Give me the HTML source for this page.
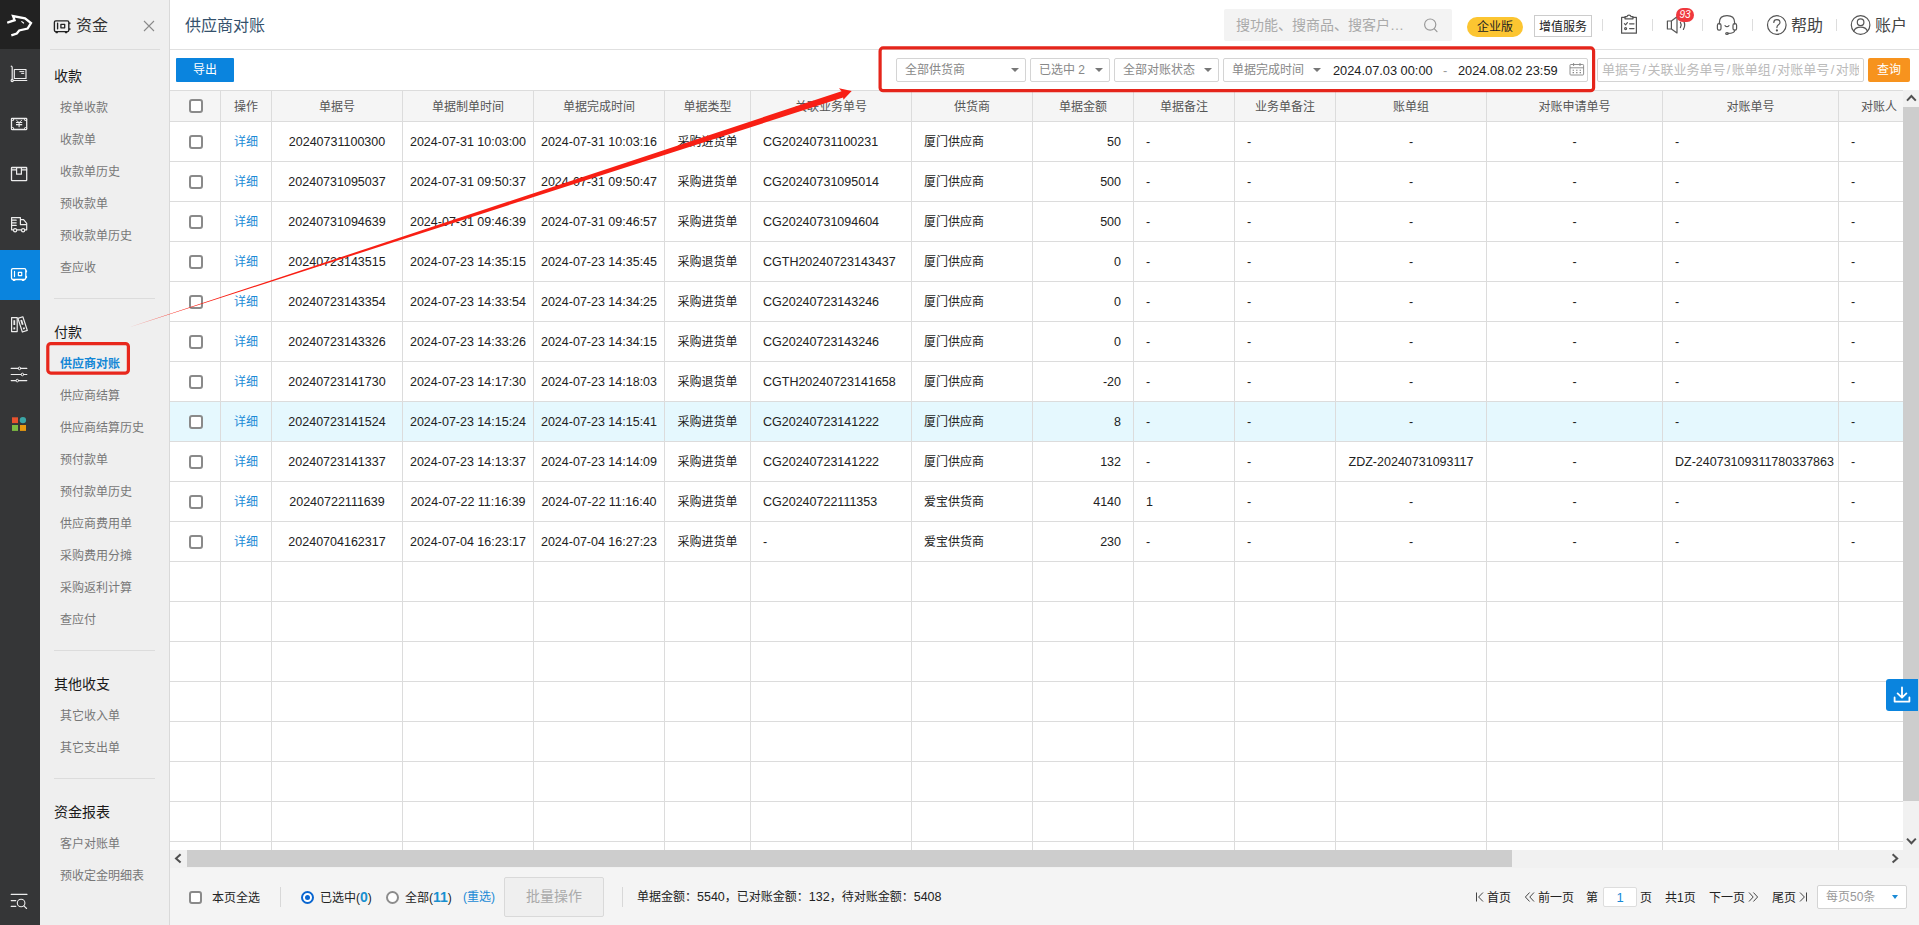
<!DOCTYPE html>
<html lang="zh-CN"><head><meta charset="utf-8"><title>供应商对账</title>
<style>
*{box-sizing:border-box;margin:0;padding:0}
html,body{width:1919px;height:925px;overflow:hidden;background:#fff}
body{font-family:"Liberation Sans","Noto Sans CJK SC",sans-serif;font-size:12px;color:#333;position:relative}
a{color:#1a8ad6;text-decoration:none}
i{font-style:normal}
.abs{position:absolute}
/* left rail */
#rail{position:absolute;left:0;top:0;width:40px;height:925px;background:#353637}
#rail .logo{position:absolute;left:0;top:0;width:40px;height:49px;background:#222}
#rail .act{position:absolute;left:0;top:250px;width:40px;height:50px;background:#0a84de}
#rail svg{position:absolute;left:0}
/* sidebar */
#side{position:absolute;left:40px;top:0;width:130px;height:925px;background:#efefef;border-right:1px solid #d9d9d9}
#side .ttl{position:absolute;left:36px;top:15px;font-size:16px;color:#333;line-height:22px}
#side .hr{position:absolute;left:10px;width:110px;height:1px;background:#dcdcdc}
#side .sec{margin-top:1px;position:absolute;left:14px;font-size:14px;color:#1a1a1a;line-height:20px}
#side .it{margin-top:1px;position:absolute;left:20px;font-size:12px;color:#777;line-height:18px;white-space:nowrap}
#side .it.on{color:#1487d6;font-weight:bold}
/* header */
#head{position:absolute;left:170px;top:0;width:1749px;height:50px;border-bottom:1px solid #e0e0e0;background:#fff}
#head .title{position:absolute;left:15px;top:14px;font-size:16px;line-height:24px;color:#34516c}
/* toolbar */
#tool{position:absolute;left:170px;top:50px;width:1749px;height:40px;background:#fff}
.btn-exp{position:absolute;left:6px;top:8px;width:58px;height:24px;background:#0a84de;color:#fff;font-size:12px;line-height:25px;text-align:center;border-radius:1px}
.sel{position:absolute;top:8px;height:24px;border:1px solid #d4d4d4;border-radius:2px;background:#fff;color:#888;font-size:12px;line-height:22px;padding-left:8px;white-space:nowrap}
.sel .car{position:absolute;right:6px;top:9px;width:0;height:0;border-left:4px solid transparent;border-right:4px solid transparent;border-top:4px solid #777}
/* grid */
.grid{position:absolute;left:170px;top:90px;width:1733px;height:760px;overflow:hidden;border-top:1px solid #dcdcdc;background:#fff}
.tr{display:flex;height:40px;white-space:nowrap}
.tr.th{height:31px;background:#f5f5f5;color:#555}
.tr.hl{background:#e5f8fe}
.td{flex:none;height:40px;border-right:1px solid #dcdcdc;border-bottom:1px solid #dcdcdc;text-align:center;line-height:41px;overflow:hidden;color:#222}
.tr.th .td{height:31px;line-height:32px;color:#555}
.td.n{font-size:12.5px}
.td.l{text-align:left;padding-left:12px}
.td.r{text-align:right;padding-right:12px}
.td.c0{width:51px;position:relative}
.td.c1{width:51px}
.cb{position:absolute;left:19px;top:13px;width:14px;height:14px;border:2px solid #8a8a8a;border-radius:3px;background:#fff}
.tr.th .cb{top:8px}
/* footer */
#foot{position:absolute;left:170px;top:868px;width:1749px;height:57px;background:#f4f4f4;font-size:12px;color:#222}
#foot span,#foot a{position:absolute;white-space:nowrap;line-height:18px;margin-top:1px}
.gsearch{position:absolute;left:1054px;top:9px;width:228px;height:32px;background:#f3f3f3;border-radius:2px}
.gsearch span{position:absolute;left:12px;top:6px;font-size:14px;line-height:20px;color:#aaa;white-space:nowrap}
.pill{position:absolute;left:1297px;top:17px;width:56px;height:20px;border-radius:10px;background:#fcc531;color:#222;font-size:12px;line-height:20px;text-align:center}
.vas{position:absolute;left:1364px;top:15px;width:58px;height:22px;border:1px solid #ccc;color:#222;font-size:12px;line-height:22px;text-align:center;white-space:nowrap}
.vsep{position:absolute;top:19px;width:1px;height:12px;background:#ddd}
.badge{position:absolute;left:1506px;top:8px;width:18px;height:14px;border-radius:7px;background:#f0383e;color:#fff;font-size:10px;line-height:14px;text-align:center;font-style:italic}
.htxt{position:absolute;top:14px;font-size:16px;line-height:24px;color:#444;white-space:nowrap}
.sel .dt{position:absolute;top:1px;color:#222;font-size:12.8px;line-height:22px}
.sel.kw{padding-left:4px;overflow:hidden;font-size:13px;color:#bbb}
.sel.kw span{display:block;width:257px;overflow:hidden;white-space:nowrap}
.sel.kw i{padding:0 1.4px}
.btn-q{position:absolute;left:1698px;top:8px;width:42px;height:24px;background:#f7931e;color:#fff;font-size:12px;line-height:24px;text-align:center;border-radius:2px}
.vtrack{position:absolute;left:1903px;top:90px;width:16px;height:760px;background:#f1f1f1}
.vthumb{position:absolute;left:1903px;top:107px;width:16px;height:694px;background:#cdcdcd}
.htrack{position:absolute;left:170px;top:850px;width:1749px;height:18px;background:#f1f1f1}
.hthumb{position:absolute;left:187px;top:850px;width:1325px;height:17px;background:#cdcdcd}
.dl{position:absolute;left:1886px;top:679px;width:32px;height:32px;background:#0a84de;border-radius:3px 0 0 3px}
.dl svg{position:absolute;left:5px;top:5px}
#foot b{color:#1890d0;font-size:14px;line-height:14px}
#foot em{font-style:normal;font-size:12.5px}
.fsep{position:absolute;top:19px;width:1px;height:20px;background:#d8d8d8}
.rd{position:absolute;top:23px;width:13px;height:13px;border-radius:50%;border:2px solid #8c8c8c;background:#fff}
.rd.on{border-color:#0a66d0}
.rd.on:after{content:"";position:absolute;left:2px;top:2px;width:5px;height:5px;border-radius:50%;background:#0a66d0}
.bat{position:absolute;left:334px;top:9px;width:100px;height:40px;border:1px solid #d9d9d9;border-radius:2px;background:#efefef;color:#aaa;font-size:14px;line-height:37px;text-align:center}
.pgin{position:absolute;left:1433px;top:19px;width:34px;height:20px;border:1px solid #ddd;border-radius:2px;background:#fff;color:#1a8ad6;font-size:13px;line-height:19px;text-align:center}
.pgsel{position:absolute;left:1647px;top:17px;width:90px;height:24px;border:1px solid #d4d4d4;border-radius:2px;background:#fff;color:#999;font-size:12px;line-height:22px;padding-left:8px}
.pgsel i{position:absolute;right:8px;top:9px;width:0;height:0;border-left:3px solid transparent;border-right:3px solid transparent;border-top:4px solid #1a8ad6}

</style></head>
<body>
<div id="rail">
  <div class="logo"></div>
  <div class="act"></div>
  <svg width="40" height="925" viewBox="0 0 40 925" fill="none" stroke="#ededed" stroke-width="1.2" stroke-linecap="round" stroke-linejoin="round" style="top:0">
  <!-- logo -->
  <path d="M8.3 22.4 L14.6 20.2 L13 16 L25 18.4 L31 23 L27.6 28.6 L19.2 30.5 L16.8 33.5 L12.4 35" stroke="#fff" stroke-width="2.3" stroke-linecap="square" stroke-linejoin="miter"/>
  <path d="M21.8 21.6 L23.6 23" stroke="#fff" stroke-width="1.2"/>
  <!-- trolley -->
  <path d="M11.2 66.2 Q12.2 66.4 12.2 67.6 V79.4 M13.3 80.5 H26.8"/>
  <circle cx="12.2" cy="80.5" r="1.1"/>
  <rect x="14.3" y="69.5" width="11.7" height="9"/>
  <path d="M19.8 71.6 H23.8 M21.6 73.4 H23.8" stroke-width="1"/>
  <!-- bill -->
  <rect x="11.5" y="118.5" width="15.2" height="11" rx="0.5" stroke-width="1.3"/>
  <g fill="#ededed" stroke="none"><circle cx="12.6" cy="119.6" r="1.5"/><circle cx="25.6" cy="119.6" r="1.5"/><circle cx="12.6" cy="128.4" r="1.5"/><circle cx="25.6" cy="128.4" r="1.5"/></g>
  <g fill="#353637" stroke="none"><circle cx="12.6" cy="119.6" r="0.55"/><circle cx="25.6" cy="119.6" r="0.55"/><circle cx="12.6" cy="128.4" r="0.55"/><circle cx="25.6" cy="128.4" r="0.55"/></g>
  <path d="M16.6 120.4 L19.1 122.6 L21.6 120.4" stroke-width="0.9"/>
  <path d="M16 122.5 H22.2 M16 124.6 H22.2 M19.1 122.6 V127.2" stroke-width="1.1" stroke-linecap="butt"/>
  <!-- package -->
  <rect x="11.5" y="167.5" width="15.2" height="13.1" rx="0.6" stroke-width="1.3"/>
  <path d="M11.5 169.8 H16.6 M21.4 169.8 H26.7 M16.6 167.5 V174.2 H21.4 V167.5"/>
  <!-- truck -->
  <path d="M11.6 217.6 H20.4 V224.6 H26.7 M20.4 219.6 H23.6 L26.7 223.4 V229.8 H24.8 M21.4 229.8 H16.8 M13.4 229.8 H11.6 V217.6 M11.6 220.2 H16.2 M11.6 222.8 H16.2 M11.6 225.4 H16.2"/>
  <circle cx="15.1" cy="230.2" r="1.6"/><circle cx="23.1" cy="230.2" r="1.6"/>
  <!-- safe (active) -->
  <g stroke="#fff">
  <rect x="11.5" y="268.6" width="14.3" height="10.9" rx="1.4" stroke-width="1.3"/>
  <path d="M14.5 271.4 V276.6 M13.4 280.4 H14.8 M22.4 280.4 H23.8 M26.5 270.8 V271.8 M26.5 276.4 V277.4"/>
  <rect x="18.4" y="272.3" width="3.3" height="3.3" stroke-width="1.2"/>
  </g>
  <!-- binders -->
  <rect x="11.6" y="317.6" width="5.6" height="14" />
  <rect x="13.4" y="320.2" width="1.8" height="4.8" fill="#ededed" stroke="none"/>
  <rect x="13.4" y="327.4" width="1.8" height="2" fill="#ededed" stroke="none"/>
  <g transform="rotate(-18 22.6 324.4)">
  <rect x="20" y="317.2" width="5.2" height="14.4"/>
  <rect x="21.7" y="319.8" width="1.8" height="5" fill="#ededed" stroke="none"/>
  <rect x="21.7" y="327.6" width="1.8" height="1.8" fill="#ededed" stroke="none"/>
  </g>
  <!-- sliders -->
  <path d="M11.2 368.4 H18.2 M20.8 368.4 H26.8 M11.2 374.5 H21.1 M23.7 374.5 H26.8 M11.2 380.6 H16 M18.6 380.6 H26.8"/>
  <circle cx="19.5" cy="368.4" r="1.3" stroke-width="1"/><circle cx="22.4" cy="374.5" r="1.3" stroke-width="1"/><circle cx="17.3" cy="380.6" r="1.3" stroke-width="1"/>
  <!-- colour apps -->
  <g stroke="none">
  <rect x="12" y="417.3" width="6" height="5.8" fill="#e8522e"/>
  <circle cx="22.9" cy="420.1" r="3.2" fill="#3ba6a6"/>
  <rect x="12" y="425" width="6" height="5.9" fill="#7cbb42"/>
  <rect x="20" y="425" width="6" height="5.9" fill="#e8990f"/>
  </g>
  <!-- bottom search list -->
  <path d="M11.2 894.4 H27 M11.2 900.6 H15.8 M11.2 906.4 H15.8 M23.9 905.8 L26.6 908.5" stroke-width="1.1"/>
  <circle cx="21.1" cy="903" r="3.8" stroke-width="1.1"/>
</svg>

</div>
<div id="side">
  <svg class="abs" style="left:10px;top:16px" width="24" height="20" viewBox="50 16 24 20" fill="none" stroke="#222" stroke-width="1.35" stroke-linejoin="round" stroke-linecap="round">
  <rect x="54.4" y="20.8" width="14.4" height="10.8" rx="1.4"/>
  <path d="M57.6 23.2 V28.8 M56 32.6 H57.4 M65.4 32.6 H66.8 M69.8 22.8 V23.6 M69.8 28.6 V29.4"/>
  <rect x="60.9" y="24.3" width="3.8" height="3.5" stroke-width="1.3"/>
</svg>
<svg class="abs" style="left:102px;top:19px" width="14" height="14" viewBox="142 19 14 14" stroke="#8a8a8a" stroke-width="1.1" fill="none"><path d="M144 21 L154 31 M154 21 L144 31"/></svg>

  <div class="ttl">资金</div>
  <div class="hr" style="top:49px"></div>
  <div class="sec" style="top:65px">收款</div>
  <div class="it" style="top:98px">按单收款</div>
  <div class="it" style="top:130px">收款单</div>
  <div class="it" style="top:162px">收款单历史</div>
  <div class="it" style="top:194px">预收款单</div>
  <div class="it" style="top:226px">预收款单历史</div>
  <div class="it" style="top:258px">查应收</div>
  <div class="hr" style="top:298px;left:14px;width:101px"></div>
  <div class="sec" style="top:321px">付款</div>
  <div class="it on" style="top:354px">供应商对账</div>
  <div class="it" style="top:386px">供应商结算</div>
  <div class="it" style="top:418px">供应商结算历史</div>
  <div class="it" style="top:450px">预付款单</div>
  <div class="it" style="top:482px">预付款单历史</div>
  <div class="it" style="top:514px">供应商费用单</div>
  <div class="it" style="top:546px">采购费用分摊</div>
  <div class="it" style="top:578px">采购返利计算</div>
  <div class="it" style="top:610px">查应付</div>
  <div class="hr" style="top:650px;left:14px;width:101px"></div>
  <div class="sec" style="top:673px">其他收支</div>
  <div class="it" style="top:706px">其它收入单</div>
  <div class="it" style="top:738px">其它支出单</div>
  <div class="hr" style="top:778px;left:14px;width:101px"></div>
  <div class="sec" style="top:801px">资金报表</div>
  <div class="it" style="top:834px">客户对账单</div>
  <div class="it" style="top:866px">预收定金明细表</div>
</div>
<div id="head">
  <div class="title">供应商对账</div>
  <div class="gsearch"><span>搜功能、搜商品、搜客户…</span>
  <svg class="abs" style="left:198px;top:7px" width="18" height="18" viewBox="0 0 18 18" fill="none" stroke="#999" stroke-width="1.2" stroke-linecap="round"><circle cx="8.2" cy="8.6" r="5.6"/><path d="M12.4 12.8 L15 15.6"/></svg>
</div>
<div class="pill">企业版</div>
<div class="vas">增值服务</div>
<i class="vsep" style="left:1432px"></i>
<i class="vsep" style="left:1482px"></i>
<i class="vsep" style="left:1532px"></i>
<i class="vsep" style="left:1582px"></i>
<i class="vsep" style="left:1666px"></i>
<!-- clipboard -->
<svg class="abs" style="left:1448px;top:12px" width="22" height="24" viewBox="1618 12 22 24" fill="none" stroke="#555" stroke-width="1.2" stroke-linejoin="round" stroke-linecap="round">
  <path d="M1625 17.4 H1621.6 V33.2 H1636.4 V17.4 H1633"/>
  <path d="M1625 18.8 V16.6 H1627 Q1627.2 15.2 1629 15.2 Q1630.8 15.2 1631 16.6 H1633 V18.8 Z"/>
  <path d="M1624.4 23.6 L1625.6 24.8 L1627.4 22.6 M1629.6 23.8 H1634 M1629.6 28.6 H1634"/>
  <circle cx="1625.6" cy="28.6" r="1"/>
</svg>
<!-- speaker -->
<svg class="abs" style="left:1494px;top:6px" width="34" height="30" viewBox="1664 6 34 30" fill="none" stroke="#555" stroke-width="1.2" stroke-linejoin="round" stroke-linecap="round">
  <path d="M1667.4 21 H1671.4 L1677 16.8 V33 L1671.4 29 H1667.4 Z M1671.4 21 V29"/>
  <path d="M1680.4 22.4 Q1682 25 1680.4 27.6 M1683.4 20.6 Q1686 25 1683.4 29.4"/>
</svg>
<div class="badge">93</div>
<!-- headset -->
<svg class="abs" style="left:1544px;top:12px" width="26" height="26" viewBox="1714 12 26 26" fill="none" stroke="#555" stroke-width="1.2" stroke-linejoin="round" stroke-linecap="round">
  <path d="M1719.4 24 V22.4 Q1719.4 15.6 1727 15.6 Q1734.6 15.6 1734.6 22.4 V24"/>
  <rect x="1717.4" y="23.6" width="3.6" height="6.6" rx="1.6"/>
  <rect x="1733" y="23.6" width="3.6" height="6.6" rx="1.6"/>
  <path d="M1734.8 30.2 Q1734.4 33.4 1728 33.4"/>
  <ellipse cx="1727" cy="33.4" rx="1.3" ry="0.9"/>
  <path d="M1725 25.6 Q1727 27.8 1729 25.6"/>
</svg>
<!-- help -->
<svg class="abs" style="left:1596px;top:14px" width="22" height="22" viewBox="1766 14 22 22" fill="none" stroke="#555" stroke-width="1.2" stroke-linecap="round"><circle cx="1776.8" cy="25" r="9.3"/><path d="M1773.8 22.4 Q1773.8 19.6 1776.9 19.6 Q1780 19.6 1780 22.2 Q1780 23.8 1778.4 24.8 Q1776.9 25.8 1776.9 27.6"/><circle cx="1776.9" cy="30.4" r="0.5" fill="#555"/></svg>
<div class="htxt" style="left:1621px">帮助</div>
<!-- account -->
<svg class="abs" style="left:1680px;top:14px" width="22" height="22" viewBox="1850 14 22 22" fill="none" stroke="#555" stroke-width="1.2" stroke-linecap="round"><circle cx="1860.6" cy="25" r="9.3"/><circle cx="1860.6" cy="22.2" r="3.3"/><path d="M1853.8 31.2 Q1855.2 27.2 1860.6 27.2 Q1866 27.2 1867.4 31.2"/></svg>
<div class="htxt" style="left:1705px">账户</div>

</div>
<div id="tool">
  <div class="btn-exp">导出</div>
  <div class="sel" style="left:726px;width:130px">全部供货商<i class="car"></i></div>
<div class="sel" style="left:860px;width:80px">已选中 2<i class="car"></i></div>
<div class="sel" style="left:944px;width:105px">全部对账状态<i class="car"></i></div>
<div class="sel" style="left:1053px;width:365px">单据完成时间<i class="car" style="right:auto;left:89px"></i>
  <span class="dt" style="left:109px">2024.07.03 00:00</span><span class="dt" style="left:219px;color:#999">-</span><span class="dt" style="left:234px">2024.08.02 23:59</span>
  <svg class="abs" style="left:345px;top:3px" width="16" height="14" viewBox="0 0 16 14" fill="none" stroke="#858585" stroke-width="0.9"><rect x="1" y="2.5" width="13.6" height="10.5" rx="0.8"/><path d="M1 5.8 H14.6 M4.6 1 V4 M11 1 V4" /><path d="M3.6 8.2 H5 M7.1 8.2 H8.5 M10.6 8.2 H12 M3.6 10.6 H5 M7.1 10.6 H8.5 M10.6 10.6 H12" stroke-width="1.1"/></svg>
</div>
<div class="sel kw" style="left:1427px;width:267px"><span>单据号<i>/</i>关联业务单号<i>/</i>账单组<i>/</i>对账单号<i>/</i>对账人</span></div>
<div class="btn-q">查询</div>

</div>
<div class="grid">
<div class="tr th"><div class="td c0"><i class="cb"></i></div><div class="td c1">操作</div>
<div class="td" style="width:131px">单据号</div>
<div class="td" style="width:131px">单据制单时间</div>
<div class="td" style="width:131px">单据完成时间</div>
<div class="td" style="width:86px">单据类型</div>
<div class="td" style="width:161px">关联业务单号</div>
<div class="td" style="width:121px">供货商</div>
<div class="td" style="width:101px">单据金额</div>
<div class="td" style="width:101px">单据备注</div>
<div class="td" style="width:101px">业务单备注</div>
<div class="td" style="width:151px">账单组</div>
<div class="td" style="width:176px">对账申请单号</div>
<div class="td" style="width:176px">对账单号</div>
<div class="td" style="width:81px">对账人</div>
</div>
<div class="tr"><div class="td c0"><i class="cb"></i></div><div class="td c1"><a>详细</a></div>
<div class="td c n" style="width:131px">20240731100300</div>
<div class="td c n" style="width:131px">2024-07-31 10:03:00</div>
<div class="td c n" style="width:131px">2024-07-31 10:03:16</div>
<div class="td c" style="width:86px">采购进货单</div>
<div class="td l n" style="width:161px">CG20240731100231</div>
<div class="td l" style="width:121px">厦门供应商</div>
<div class="td r n" style="width:101px">50</div>
<div class="td l n" style="width:101px">-</div>
<div class="td l n" style="width:101px">-</div>
<div class="td c n" style="width:151px">-</div>
<div class="td c n" style="width:176px">-</div>
<div class="td l n" style="width:176px">-</div>
<div class="td l n" style="width:81px">-</div>
</div>
<div class="tr"><div class="td c0"><i class="cb"></i></div><div class="td c1"><a>详细</a></div>
<div class="td c n" style="width:131px">20240731095037</div>
<div class="td c n" style="width:131px">2024-07-31 09:50:37</div>
<div class="td c n" style="width:131px">2024-07-31 09:50:47</div>
<div class="td c" style="width:86px">采购进货单</div>
<div class="td l n" style="width:161px">CG20240731095014</div>
<div class="td l" style="width:121px">厦门供应商</div>
<div class="td r n" style="width:101px">500</div>
<div class="td l n" style="width:101px">-</div>
<div class="td l n" style="width:101px">-</div>
<div class="td c n" style="width:151px">-</div>
<div class="td c n" style="width:176px">-</div>
<div class="td l n" style="width:176px">-</div>
<div class="td l n" style="width:81px">-</div>
</div>
<div class="tr"><div class="td c0"><i class="cb"></i></div><div class="td c1"><a>详细</a></div>
<div class="td c n" style="width:131px">20240731094639</div>
<div class="td c n" style="width:131px">2024-07-31 09:46:39</div>
<div class="td c n" style="width:131px">2024-07-31 09:46:57</div>
<div class="td c" style="width:86px">采购进货单</div>
<div class="td l n" style="width:161px">CG20240731094604</div>
<div class="td l" style="width:121px">厦门供应商</div>
<div class="td r n" style="width:101px">500</div>
<div class="td l n" style="width:101px">-</div>
<div class="td l n" style="width:101px">-</div>
<div class="td c n" style="width:151px">-</div>
<div class="td c n" style="width:176px">-</div>
<div class="td l n" style="width:176px">-</div>
<div class="td l n" style="width:81px">-</div>
</div>
<div class="tr"><div class="td c0"><i class="cb"></i></div><div class="td c1"><a>详细</a></div>
<div class="td c n" style="width:131px">20240723143515</div>
<div class="td c n" style="width:131px">2024-07-23 14:35:15</div>
<div class="td c n" style="width:131px">2024-07-23 14:35:45</div>
<div class="td c" style="width:86px">采购退货单</div>
<div class="td l n" style="width:161px">CGTH20240723143437</div>
<div class="td l" style="width:121px">厦门供应商</div>
<div class="td r n" style="width:101px">0</div>
<div class="td l n" style="width:101px">-</div>
<div class="td l n" style="width:101px">-</div>
<div class="td c n" style="width:151px">-</div>
<div class="td c n" style="width:176px">-</div>
<div class="td l n" style="width:176px">-</div>
<div class="td l n" style="width:81px">-</div>
</div>
<div class="tr"><div class="td c0"><i class="cb"></i></div><div class="td c1"><a>详细</a></div>
<div class="td c n" style="width:131px">20240723143354</div>
<div class="td c n" style="width:131px">2024-07-23 14:33:54</div>
<div class="td c n" style="width:131px">2024-07-23 14:34:25</div>
<div class="td c" style="width:86px">采购进货单</div>
<div class="td l n" style="width:161px">CG20240723143246</div>
<div class="td l" style="width:121px">厦门供应商</div>
<div class="td r n" style="width:101px">0</div>
<div class="td l n" style="width:101px">-</div>
<div class="td l n" style="width:101px">-</div>
<div class="td c n" style="width:151px">-</div>
<div class="td c n" style="width:176px">-</div>
<div class="td l n" style="width:176px">-</div>
<div class="td l n" style="width:81px">-</div>
</div>
<div class="tr"><div class="td c0"><i class="cb"></i></div><div class="td c1"><a>详细</a></div>
<div class="td c n" style="width:131px">20240723143326</div>
<div class="td c n" style="width:131px">2024-07-23 14:33:26</div>
<div class="td c n" style="width:131px">2024-07-23 14:34:15</div>
<div class="td c" style="width:86px">采购进货单</div>
<div class="td l n" style="width:161px">CG20240723143246</div>
<div class="td l" style="width:121px">厦门供应商</div>
<div class="td r n" style="width:101px">0</div>
<div class="td l n" style="width:101px">-</div>
<div class="td l n" style="width:101px">-</div>
<div class="td c n" style="width:151px">-</div>
<div class="td c n" style="width:176px">-</div>
<div class="td l n" style="width:176px">-</div>
<div class="td l n" style="width:81px">-</div>
</div>
<div class="tr"><div class="td c0"><i class="cb"></i></div><div class="td c1"><a>详细</a></div>
<div class="td c n" style="width:131px">20240723141730</div>
<div class="td c n" style="width:131px">2024-07-23 14:17:30</div>
<div class="td c n" style="width:131px">2024-07-23 14:18:03</div>
<div class="td c" style="width:86px">采购退货单</div>
<div class="td l n" style="width:161px">CGTH20240723141658</div>
<div class="td l" style="width:121px">厦门供应商</div>
<div class="td r n" style="width:101px">-20</div>
<div class="td l n" style="width:101px">-</div>
<div class="td l n" style="width:101px">-</div>
<div class="td c n" style="width:151px">-</div>
<div class="td c n" style="width:176px">-</div>
<div class="td l n" style="width:176px">-</div>
<div class="td l n" style="width:81px">-</div>
</div>
<div class="tr hl"><div class="td c0"><i class="cb"></i></div><div class="td c1"><a>详细</a></div>
<div class="td c n" style="width:131px">20240723141524</div>
<div class="td c n" style="width:131px">2024-07-23 14:15:24</div>
<div class="td c n" style="width:131px">2024-07-23 14:15:41</div>
<div class="td c" style="width:86px">采购进货单</div>
<div class="td l n" style="width:161px">CG20240723141222</div>
<div class="td l" style="width:121px">厦门供应商</div>
<div class="td r n" style="width:101px">8</div>
<div class="td l n" style="width:101px">-</div>
<div class="td l n" style="width:101px">-</div>
<div class="td c n" style="width:151px">-</div>
<div class="td c n" style="width:176px">-</div>
<div class="td l n" style="width:176px">-</div>
<div class="td l n" style="width:81px">-</div>
</div>
<div class="tr"><div class="td c0"><i class="cb"></i></div><div class="td c1"><a>详细</a></div>
<div class="td c n" style="width:131px">20240723141337</div>
<div class="td c n" style="width:131px">2024-07-23 14:13:37</div>
<div class="td c n" style="width:131px">2024-07-23 14:14:09</div>
<div class="td c" style="width:86px">采购进货单</div>
<div class="td l n" style="width:161px">CG20240723141222</div>
<div class="td l" style="width:121px">厦门供应商</div>
<div class="td r n" style="width:101px">132</div>
<div class="td l n" style="width:101px">-</div>
<div class="td l n" style="width:101px">-</div>
<div class="td c n" style="width:151px">ZDZ-20240731093117</div>
<div class="td c n" style="width:176px">-</div>
<div class="td l n" style="width:176px">DZ-24073109311780337863</div>
<div class="td l n" style="width:81px">-</div>
</div>
<div class="tr"><div class="td c0"><i class="cb"></i></div><div class="td c1"><a>详细</a></div>
<div class="td c n" style="width:131px">20240722111639</div>
<div class="td c n" style="width:131px">2024-07-22 11:16:39</div>
<div class="td c n" style="width:131px">2024-07-22 11:16:40</div>
<div class="td c" style="width:86px">采购进货单</div>
<div class="td l n" style="width:161px">CG20240722111353</div>
<div class="td l" style="width:121px">爱宝供货商</div>
<div class="td r n" style="width:101px">4140</div>
<div class="td l n" style="width:101px">1</div>
<div class="td l n" style="width:101px">-</div>
<div class="td c n" style="width:151px">-</div>
<div class="td c n" style="width:176px">-</div>
<div class="td l n" style="width:176px">-</div>
<div class="td l n" style="width:81px">-</div>
</div>
<div class="tr"><div class="td c0"><i class="cb"></i></div><div class="td c1"><a>详细</a></div>
<div class="td c n" style="width:131px">20240704162317</div>
<div class="td c n" style="width:131px">2024-07-04 16:23:17</div>
<div class="td c n" style="width:131px">2024-07-04 16:27:23</div>
<div class="td c" style="width:86px">采购进货单</div>
<div class="td l n" style="width:161px">-</div>
<div class="td l" style="width:121px">爱宝供货商</div>
<div class="td r n" style="width:101px">230</div>
<div class="td l n" style="width:101px">-</div>
<div class="td l n" style="width:101px">-</div>
<div class="td c n" style="width:151px">-</div>
<div class="td c n" style="width:176px">-</div>
<div class="td l n" style="width:176px">-</div>
<div class="td l n" style="width:81px">-</div>
</div>
<div class="tr"><div class="td c0"></div><div class="td c1"></div>
<div class="td" style="width:131px"></div>
<div class="td" style="width:131px"></div>
<div class="td" style="width:131px"></div>
<div class="td" style="width:86px"></div>
<div class="td" style="width:161px"></div>
<div class="td" style="width:121px"></div>
<div class="td" style="width:101px"></div>
<div class="td" style="width:101px"></div>
<div class="td" style="width:101px"></div>
<div class="td" style="width:151px"></div>
<div class="td" style="width:176px"></div>
<div class="td" style="width:176px"></div>
<div class="td" style="width:81px"></div>
</div>
<div class="tr"><div class="td c0"></div><div class="td c1"></div>
<div class="td" style="width:131px"></div>
<div class="td" style="width:131px"></div>
<div class="td" style="width:131px"></div>
<div class="td" style="width:86px"></div>
<div class="td" style="width:161px"></div>
<div class="td" style="width:121px"></div>
<div class="td" style="width:101px"></div>
<div class="td" style="width:101px"></div>
<div class="td" style="width:101px"></div>
<div class="td" style="width:151px"></div>
<div class="td" style="width:176px"></div>
<div class="td" style="width:176px"></div>
<div class="td" style="width:81px"></div>
</div>
<div class="tr"><div class="td c0"></div><div class="td c1"></div>
<div class="td" style="width:131px"></div>
<div class="td" style="width:131px"></div>
<div class="td" style="width:131px"></div>
<div class="td" style="width:86px"></div>
<div class="td" style="width:161px"></div>
<div class="td" style="width:121px"></div>
<div class="td" style="width:101px"></div>
<div class="td" style="width:101px"></div>
<div class="td" style="width:101px"></div>
<div class="td" style="width:151px"></div>
<div class="td" style="width:176px"></div>
<div class="td" style="width:176px"></div>
<div class="td" style="width:81px"></div>
</div>
<div class="tr"><div class="td c0"></div><div class="td c1"></div>
<div class="td" style="width:131px"></div>
<div class="td" style="width:131px"></div>
<div class="td" style="width:131px"></div>
<div class="td" style="width:86px"></div>
<div class="td" style="width:161px"></div>
<div class="td" style="width:121px"></div>
<div class="td" style="width:101px"></div>
<div class="td" style="width:101px"></div>
<div class="td" style="width:101px"></div>
<div class="td" style="width:151px"></div>
<div class="td" style="width:176px"></div>
<div class="td" style="width:176px"></div>
<div class="td" style="width:81px"></div>
</div>
<div class="tr"><div class="td c0"></div><div class="td c1"></div>
<div class="td" style="width:131px"></div>
<div class="td" style="width:131px"></div>
<div class="td" style="width:131px"></div>
<div class="td" style="width:86px"></div>
<div class="td" style="width:161px"></div>
<div class="td" style="width:121px"></div>
<div class="td" style="width:101px"></div>
<div class="td" style="width:101px"></div>
<div class="td" style="width:101px"></div>
<div class="td" style="width:151px"></div>
<div class="td" style="width:176px"></div>
<div class="td" style="width:176px"></div>
<div class="td" style="width:81px"></div>
</div>
<div class="tr"><div class="td c0"></div><div class="td c1"></div>
<div class="td" style="width:131px"></div>
<div class="td" style="width:131px"></div>
<div class="td" style="width:131px"></div>
<div class="td" style="width:86px"></div>
<div class="td" style="width:161px"></div>
<div class="td" style="width:121px"></div>
<div class="td" style="width:101px"></div>
<div class="td" style="width:101px"></div>
<div class="td" style="width:101px"></div>
<div class="td" style="width:151px"></div>
<div class="td" style="width:176px"></div>
<div class="td" style="width:176px"></div>
<div class="td" style="width:81px"></div>
</div>
<div class="tr"><div class="td c0"></div><div class="td c1"></div>
<div class="td" style="width:131px"></div>
<div class="td" style="width:131px"></div>
<div class="td" style="width:131px"></div>
<div class="td" style="width:86px"></div>
<div class="td" style="width:161px"></div>
<div class="td" style="width:121px"></div>
<div class="td" style="width:101px"></div>
<div class="td" style="width:101px"></div>
<div class="td" style="width:101px"></div>
<div class="td" style="width:151px"></div>
<div class="td" style="width:176px"></div>
<div class="td" style="width:176px"></div>
<div class="td" style="width:81px"></div>
</div>
<div class="tr"><div class="td c0"></div><div class="td c1"></div>
<div class="td" style="width:131px"></div>
<div class="td" style="width:131px"></div>
<div class="td" style="width:131px"></div>
<div class="td" style="width:86px"></div>
<div class="td" style="width:161px"></div>
<div class="td" style="width:121px"></div>
<div class="td" style="width:101px"></div>
<div class="td" style="width:101px"></div>
<div class="td" style="width:101px"></div>
<div class="td" style="width:151px"></div>
<div class="td" style="width:176px"></div>
<div class="td" style="width:176px"></div>
<div class="td" style="width:81px"></div>
</div>
</div>
<div class="vtrack"></div>
<div class="vthumb"></div>
<svg class="abs" style="left:1903px;top:90px" width="16" height="16" viewBox="0 0 16 16" fill="none" stroke="#505050" stroke-width="2"><path d="M4 10.6 L8.4 6 L12.8 10.6"/></svg>
<svg class="abs" style="left:1903px;top:832px" width="16" height="16" viewBox="0 0 16 16" fill="none" stroke="#505050" stroke-width="2"><path d="M4 6.6 L8.4 11.2 L12.8 6.6"/></svg>
<div class="htrack"></div>
<div class="hthumb"></div>
<svg class="abs" style="left:170px;top:850px" width="16" height="17" viewBox="0 0 16 17" fill="none" stroke="#505050" stroke-width="2"><path d="M10.6 4.2 L6 8.4 L10.6 12.6"/></svg>
<svg class="abs" style="left:1887px;top:850px" width="16" height="17" viewBox="0 0 16 17" fill="none" stroke="#505050" stroke-width="2"><path d="M5.6 4.2 L10.2 8.4 L5.6 12.6"/></svg>
<div class="dl"><svg width="22" height="22" viewBox="0 0 22 22" fill="none" stroke="#fff" stroke-width="1.8" stroke-linecap="round" stroke-linejoin="round"><path d="M11 3.4 V13.4 M6.6 9.4 L11 13.6 L15.4 9.4 M3.6 13.4 V17.6 H18.4 V13.4"/></svg></div>

<div id="foot">
  <i class="cb" style="left:19px;top:23px;width:13px;height:13px"></i>
<span style="left:42px;top:20px">本页全选</span>
<i class="fsep" style="left:110px"></i>
<i class="rd on" style="left:131px"></i>
<span style="left:150px;top:20px">已选中(<b>0</b>)</span>
<i class="rd" style="left:216px"></i>
<span style="left:235px;top:20px">全部(<b>11</b>)</span>
<a style="left:293px;top:19px">(重选)</a>
<div class="bat">批量操作</div>
<i class="fsep" style="left:452px"></i>
<span style="left:467px;top:19px">单据金额：<em>5540</em>，已对账金额：<em>132</em>，待对账金额：<em>5408</em></span>
<svg class="abs" style="left:1304px;top:22px" width="12" height="14" viewBox="0 0 12 14" fill="none" stroke="#444" stroke-width="1"><path d="M2.5 2.5 V11.5 M9 2.5 L4.6 7 L9 11.5"/></svg>
<span style="left:1317px;top:20px">首页</span>
<svg class="abs" style="left:1353px;top:22px" width="13" height="14" viewBox="0 0 13 14" fill="none" stroke="#444" stroke-width="1"><path d="M6.6 2.5 L2.4 7 L6.6 11.5 M11 2.5 L6.8 7 L11 11.5"/></svg>
<span style="left:1368px;top:20px">前一页</span>
<span style="left:1416px;top:20px">第</span>
<div class="pgin">1</div>
<span style="left:1470px;top:20px">页</span>
<span style="left:1495px;top:20px">共1页</span>
<span style="left:1539px;top:20px">下一页</span>
<svg class="abs" style="left:1577px;top:22px" width="13" height="14" viewBox="0 0 13 14" fill="none" stroke="#444" stroke-width="1"><path d="M2 2.5 L6.2 7 L2 11.5 M6.4 2.5 L10.6 7 L6.4 11.5"/></svg>
<span style="left:1602px;top:20px">尾页</span>
<svg class="abs" style="left:1627px;top:22px" width="12" height="14" viewBox="0 0 12 14" fill="none" stroke="#444" stroke-width="1"><path d="M3 2.5 L7.4 7 L3 11.5 M9.5 2.5 V11.5"/></svg>
<div class="pgsel">每页50条<i></i></div>

</div>
<svg class="abs" style="left:0;top:0;pointer-events:none" width="1919" height="925" viewBox="0 0 1919 925">
  <polygon points="128.6,327.5 841.5,91.2 839,88.3 851.7,90.9 843.4,99.8 843.1,97.5" fill="#f81f14"/>
  <rect x="880.1" y="47.9" width="713.5" height="42.8" rx="3" fill="none" stroke="#e5251b" stroke-width="3.2"/>
  <rect x="47.8" y="343.6" width="80.6" height="29.5" rx="3" fill="none" stroke="#e8271c" stroke-width="3.2"/>
</svg>


</body></html>
